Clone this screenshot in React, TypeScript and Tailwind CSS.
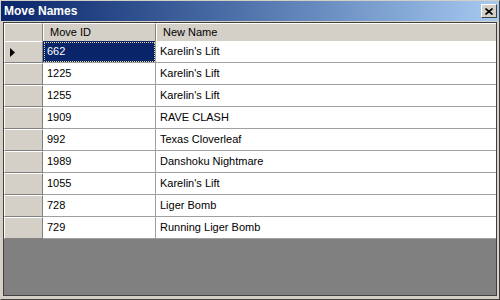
import React from "react";

type MoveRow = {
  id: string;
  name: string;
};

const ROWS: MoveRow[] = [
  { id: "662", name: "Karelin's Lift" },
  { id: "1225", name: "Karelin's Lift" },
  { id: "1255", name: "Karelin's Lift" },
  { id: "1909", name: "RAVE CLASH" },
  { id: "992", name: "Texas Cloverleaf" },
  { id: "1989", name: "Danshoku Nightmare" },
  { id: "1055", name: "Karelin's Lift" },
  { id: "728", name: "Liger Bomb" },
  { id: "729", name: "Running Liger Bomb" },
];

function CloseButton() {
  return (
    <div className="flex h-[14px] w-[16px] items-center justify-center border border-t-white border-l-white border-r-[#404040] border-b-[#404040] bg-[#d4d0c8]">
      <svg width="8" height="7" viewBox="0 0 8 7" aria-hidden>
        <path d="M0.5 0.5 L7.5 6.5 M7.5 0.5 L0.5 6.5" stroke="#000" strokeWidth="1.6" />
      </svg>
    </div>
  );
}

function RowArrow() {
  return (
    <svg width="6" height="9" viewBox="0 0 6 9" aria-hidden>
      <path d="M0 0 L5 4.5 L0 9 Z" fill="#000" />
    </svg>
  );
}

export default function App() {
  return (
    <div className="flex h-[300px] w-[500px] flex-col border border-t-[#d4d0c8] border-l-[#d4d0c8] border-r-[#404040] border-b-[#404040] bg-[#d4d0c8] font-['Liberation_Sans',Arial,sans-serif]">
      {/* title bar */}
      <div className="flex h-[20px] shrink-0 items-center justify-between bg-gradient-to-r from-[#0a246a] to-[#a6caf0] pl-[3px] pr-[2px]">
        <span className="text-[12px] font-bold leading-none text-white">Move Names</span>
        <CloseButton />
      </div>

      {/* grid */}
      <div className="mx-[2px] mt-[1px] mb-[3px] flex flex-1 flex-col border border-[#404040] bg-[#808080] text-[11px] text-black">
        <div className="grid h-[18px] shrink-0 grid-cols-[39px_113px_1fr] bg-[#d4d0c8]">
          <div className="border border-t-white border-l-white border-r-[#808080] border-b-[#808080]" />
          <div className="flex items-center border border-t-white border-l-white border-r-[#808080] border-b-[#808080] pl-[6px]">
            Move ID
          </div>
          <div className="flex items-center border-b border-t border-l border-t-white border-l-white border-b-[#808080] pl-[6px]">
            New Name
          </div>
        </div>

        {ROWS.map((row, i) => (
          <div key={i} className="grid h-[22px] shrink-0 grid-cols-[39px_113px_1fr]">
            <div className="flex items-center border border-t-white border-l-white border-r-[#808080] border-b-[#808080] bg-[#d4d0c8] pl-[5px]">
              {i === 0 && <RowArrow />}
            </div>
            {i === 0 ? (
              <div className="flex items-center border-r border-b border-r-[#a0a0a0] border-b-[#a0a0a0] bg-[#0a246a] pl-[4px] text-white outline outline-1 -outline-offset-2 outline-dotted outline-[#e8d890]">
                {row.id}
              </div>
            ) : (
              <div className="flex items-center border-r border-b border-r-[#a0a0a0] border-b-[#a0a0a0] bg-white pl-[4px]">
                {row.id}
              </div>
            )}
            <div className="flex items-center border-b border-b-[#a0a0a0] bg-white pl-[4px]">
              {row.name}
            </div>
          </div>
        ))}
      </div>
    </div>
  );
}
